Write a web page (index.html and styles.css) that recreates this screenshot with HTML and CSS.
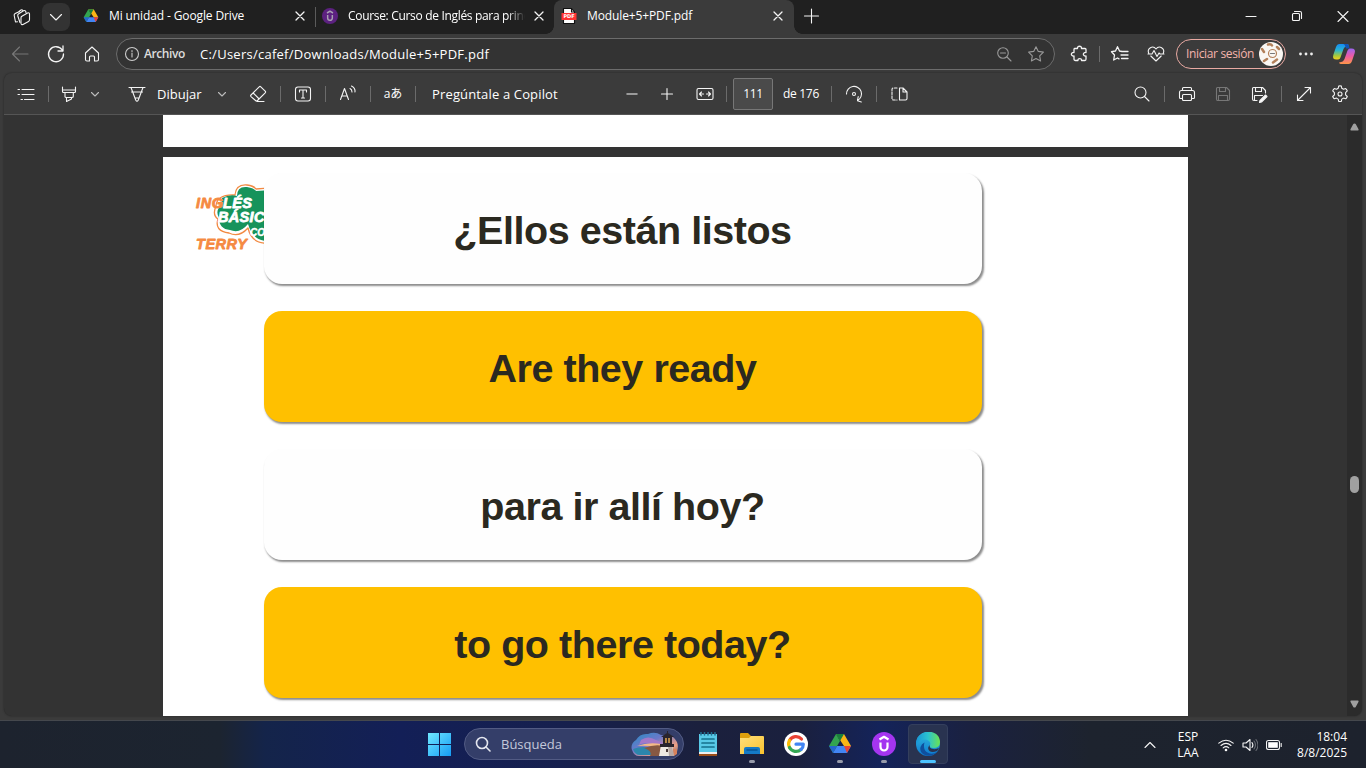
FILE: index.html
```html
<!DOCTYPE html>
<html lang="es">
<head>
<meta charset="utf-8">
<title>Module+5+PDF.pdf</title>
<link rel="stylesheet" href="styles.css">
</head>
<body>
<div class="screen">
<header class="tabstrip">
  <div class="spaces"><svg class="i20" viewBox="0 0 20 20"><path d="M5.500 14.800 3.500 15 2.200 8.500Q2 7.200 3.200 6.600L7.500 4.500M8 15.500 5.800 9Q5.300 7.600 6.700 6.800L11.500 3.700Q12.800 3 13.700 4.300L14 5.500M7 4.500 9 3Q10 2.300 11 3.500"/><path d="M9.500 9.500 15.500 6Q17.500 5.300 17.500 7V12.500Q17.500 14 16.500 14.500L11 17.500Q9.200 18 9 16.500V11Q9 10 9.500 9.500Z"/></svg></div>
  <div class="tabmenu"><svg class="i16" viewBox="0 0 16 16"><path d="m2.500 5.500 5.500 5.500 5.500-5.500"/></svg></div>
  <div class="tab first">
    <svg class="i16 plain" viewBox="0 0 24 24"><use href="#drive"/></svg>
    <span class="title">Mi unidad - Google Drive</span>
    <svg class="i16 x" viewBox="0 0 16 16"><path d="m4 4 8 8m0-8-8 8"/></svg>
  </div>
  <div class="tab second">
    <svg class="i16 plain" viewBox="0 0 24 24"><circle cx="12" cy="12" r="12" fill="#5c2180"/><path d="M8.500 10.500v4.500a3.500 3.500 0 0 0 7 0v-4.500M7.500 7.500 12 4.800l4.500 2.700" fill="none" stroke="#a9a0b2" stroke-width="2.200" stroke-linecap="butt"/></svg>
    <span class="title">Course: Curso de Inglés para princ</span>
    <svg class="i16 x" viewBox="0 0 16 16"><path d="m4 4 8 8m0-8-8 8"/></svg>
  </div>
  <div class="tab active">
    <svg class="i16 plain" viewBox="0 0 16 16"><path d="M2.500 .500h8L13.500 4v11.500h-11z" fill="#fff" stroke="#111"/><path d="M10.500 .500V4h3" fill="none" stroke="#111"/><path d="M.5 5h15v7H.5z" fill="#f33"/><text x="8" y="10.400" class="pdfmark">PDF</text></svg>
    <span class="title">Module+5+PDF.pdf</span>
    <svg class="i16 x" viewBox="0 0 16 16"><path d="m4 4 8 8m0-8-8 8"/></svg>
  </div>
  <svg class="newtab" viewBox="0 0 16 16"><path d="M7.500 1v14M.500 8h14"/></svg>
  <div class="winbtns">
    <svg class="i16" viewBox="0 0 16 16"><path d="M3 8.500h10"/></svg>
    <svg class="i16" viewBox="0 0 16 16"><rect x="3.500" y="5.500" width="7" height="7" rx="1"/><path d="M5.500 3.500h5.500q1.500 0 1.500 1.500v5.500"/></svg>
    <svg class="i16" viewBox="0 0 16 16"><path d="m3 3.500 10 10m0-10-10 10"/></svg>
  </div>
</header>

<nav class="navrow">
  <svg class="i20 dim" viewBox="0 0 20 20"><path d="M18 10H2.500M9.500 3l-7 7 7 7"/></svg>
  <svg class="i20 strong" viewBox="0 0 20 20"><path d="M16.200 6A7.500 7.500 0 1 0 17.500 10M17 2v5h-5"/></svg>
  <svg class="i20" viewBox="0 0 20 20"><path d="M3.500 9 10 3l6.500 6v6.500q0 1.500-1.500 1.500h-2.500v-4q0-1-1-1h-3q-1 0-1 1v4H5q-1.500 0-1.500-1.500z"/></svg>
  <div class="address">
    <svg class="i16" viewBox="0 0 16 16"><circle cx="8" cy="8" r="6.500"/><path d="M8 7v4M8 4.500v1"/></svg>
    <span class="scheme">Archivo</span>
    <span class="url">C:/Users/cafef/Downloads/Module+5+PDF.pdf</span>
    <svg class="i16 grey" viewBox="0 0 16 16"><circle cx="7" cy="7" r="5.300"/><path d="m11 11 4 4M4.500 7h5"/></svg>
    <svg class="star grey" viewBox="0 0 18 18"><path d="m9 1.700 2.300 4.700 5.100.7-3.700 3.700.9 5.200L9 13.500 4.400 16l.9-5.200L1.600 7.100l5.100-.7z"/></svg>
  </div>
  <svg class="i20 strong" viewBox="0 0 20 20"><path d="M5.500 4.500h3c-.5-3 4.500-3 4 0h3.500q1 0 1 1v3c-3.500-.5-3.500 4 0 3.500v3q0 1.500-1 1.500h-3.500c.5-2.500-4-2.500-3.500 0H6.500q-1.500 0-1.500-1.500V12c-3.500.5-3.500-4 0-3.500v-3q0-1 .5-1z"/></svg>
  <i class="sep"></i>
  <svg class="i20 strong" viewBox="0 0 20 20"><path d="M12 7.500 9.500 7 7.500 2.700 5.500 7 1.500 7.700l3 3.300-.8 5 3.800-2 1.500.9M11.500 7.500H18M11 11h7M11.500 14.500H18"/></svg>
  <svg class="i20" viewBox="0 0 20 20"><path d="M2.800 9.500C.5 4 7 1 10 5c3-4 9.500-1 7.200 4.500M4.800 12 10 17l5.200-5M2 10h4l2-3.500 3 6 2-3.500 1 1h4"/></svg>
  <div class="signin"><span>Iniciar sesión</span>
    <svg class="avatar plain" viewBox="0 0 24 24"><circle cx="12" cy="12" r="12" fill="#faf7f3"/><g fill="none" stroke="#b3805a" stroke-width="1.200"><circle cx="13.500" cy="11.500" r="4"/><path d="M9 2.500q3-1 4 1M3 7l2 3M5 19l3-2M14 20.500l4-3M18 5l2 2" stroke-width="2.500"/><path d="M11.500 11.500h4" stroke="#777"/></g></svg>
  </div>
  <svg class="i20 dots plain" viewBox="0 0 20 20"><circle cx="4.500" cy="10" r="1.400"/><circle cx="10" cy="10" r="1.400"/><circle cx="15.500" cy="10" r="1.400"/></svg>
  <svg class="copilot plain" viewBox="0 0 24 24">
    <path d="M17 3.500Q16.500 2 15 2H7.500Q5 2 4 5L1.300 13Q0 17.500 4.500 17.500H6q2 0 3-3.500l2.500-7Q12.500 4 17 3.500z" fill="url(#cpa)"/>
    <path d="M17.500 6.500Q17 2 15 2H11q2 0 3 4.500z" fill="#1254b8"/>
    <path d="M7 20.500Q7.500 22 9 22h7.500q2.500 0 3.500-3l2.700-8Q24 6.500 19.500 6.500H18q-2 0-3 3.500l-2.500 7Q11.500 20 7 20.500z" fill="url(#cpb)"/></svg>
</nav>

<section class="viewer">
  <div class="pdfbar">
    <svg class="i20" viewBox="0 0 20 20"><path d="M6 5.500h12M6 10.500h12M8.500 15.500H18M2 5.500h1.500M2 10.500h1.500M5 15.500h1.500"/></svg><i class="sep"></i>
    <svg class="i20" viewBox="0 0 20 20"><path d="M3.500 3v4.500q0 1 1 1h11q1 0 1-1V3M3.500 6h13M6 8.500v4.300q0 .7 1.500.7H13q1.300 0 1.300-1.300V8.500M7.500 13.500v4L12.500 15v-1.500"/></svg>
    <svg class="chev" viewBox="0 0 10 10"><path d="m1.500 3.500 3.500 3.500 3.500-3.500"/></svg>
    <svg class="i20 pen" viewBox="0 0 20 20"><path d="M2 3.500h16M4 3.500 8.700 16q1.300 2.500 2.600 0L16 3.500M4.500 8h11M8 14h4"/></svg>
    <span class="label draw">Dibujar</span>
    <svg class="chev" viewBox="0 0 10 10"><path d="m1.500 3.500 3.500 3.500 3.500-3.500"/></svg>
    <svg class="i20 eraser" viewBox="0 0 20 20"><path d="M3 11 11.200 2.800q.8-.8 1.600 0l4.400 4.400q.8.800 0 1.600L9.500 16.500q-1 1-2 0L3 12.600q-.8-.8 0-1.600zM5.200 9l6 6M9 17.500h7"/></svg><i class="sep"></i>
    <svg class="i20" viewBox="0 0 20 20"><rect x="2.500" y="3" width="15" height="14" rx="2.500"/><path d="M6.500 8V6h7v2M10 6v8M8.500 14h3"/></svg><i class="sep"></i>
    <svg class="i20" viewBox="0 0 20 20"><path d="M2.500 15.500 6.500 4.500 10.500 15.500M4 12h5M12 4.500q2 1 2 3.500M13.500 2q4 2 3.500 6"/></svg><i class="sep"></i>
    <span class="label translate">aあ</span><i class="sep"></i>
    <span class="label ask">Pregúntale a Copilot</span>
    <svg class="i16 minus" viewBox="0 0 16 16"><path d="M3 8h10"/></svg>
    <svg class="i16" viewBox="0 0 16 16"><path d="M8 2.500v11M2.500 8h11"/></svg>
    <svg class="i20 fit" viewBox="0 0 20 20"><rect x="2" y="4.500" width="16" height="11" rx="1.500"/><path d="M5 10h3.500M15 10h-3.500M6.500 8l-2 2 2 2M13.500 8l2 2-2 2"/></svg><i class="sep"></i>
    <span class="pageno">111</span><span class="label total">de 176</span><i class="sep"></i>
    <svg class="i20" viewBox="0 0 20 20"><path d="M2.500 10A7.500 7.500 0 1 1 13.500 16.500M14.200 12.500l-.7 4.300 3.800 1.200"/><circle cx="10" cy="10" r="1.500"/></svg><i class="sep"></i>
    <svg class="i20" viewBox="0 0 20 20"><path d="M10.500 4v12h6q1.500 0 1.500-1.500V8l-4-4zM14 4v4h4"/><path d="M8 4H4.500Q3 4 3 5.500v9Q3 16 4.500 16H8" stroke-dasharray="2.500 1.500"/></svg>
    <b></b>
    <svg class="i20" viewBox="0 0 20 20"><circle cx="8.500" cy="8.500" r="5.500"/><path d="m12.500 12.500 4.500 4.500"/></svg><i class="sep"></i>
    <svg class="i20" viewBox="0 0 20 20"><path d="M5.500 6V4.500q0-1 1-1h7q1 0 1 1V6M5.500 14.500h-2q-1 0-1-1v-5q0-2 2-2h11q2 0 2 2v5q0 1-1 1h-2"/><rect x="5.500" y="10.500" width="9" height="6" rx="1"/></svg>
    <svg class="i20 dim" viewBox="0 0 20 20"><path d="M4.500 3.500h9l3 3v8.500q0 1.500-1.500 1.500H4.500q-1 0-1-1.500V4.500q0-1 1-1zM6.500 3.500v4h6v-4M5.500 16.500v-5h9v5"/></svg>
    <svg class="i20" viewBox="0 0 20 20"><path d="M16.500 9V6.500l-3-3h-9q-1 0-1 1V15q0 1.500 1.500 1.500h3M6.500 3.500v4h6v-4M5.500 16.500v-5h8"/><path d="m11 16.500 5.500-5.500 1.500 1.500-5.500 5.500-2 .5z" fill="#fff"/></svg><i class="sep"></i>
    <svg class="i20" viewBox="0 0 20 20"><path d="m3.500 16.500 13-13M11 3.500h5.500V9M3.500 11v5.500H9"/></svg>
    <svg class="i20" viewBox="0 0 20 20"><path d="M10 1.800q1 0 1.300.2l.5 2.300 1.700 1 2.200-.7q1 .9 1.600 2.300l-1.700 1.700v2.300l1.700 1.600q-.6 1.400-1.600 2.300l-2.200-.7-1.700 1-.5 2.300q-1.300.3-2.600 0l-.5-2.300-1.700-1-2.200.7q-1-.9-1.600-2.300l1.700-1.600V8.600L2.700 6.900q.6-1.400 1.600-2.300l2.200.7 1.700-1L8.700 2z"/><circle cx="10" cy="10" r="2"/></svg>
  </div>
  <div class="content">
    <main class="pages">
      <div class="page previous"></div>
      <div class="page current">
        <svg class="logo plain" viewBox="0 0 69 72">
          <path d="M23 38Q17 34 21 25Q22 13 40 14Q41 3 52 4Q59 5 61 8L75 7V62Q57 64 53 47Q44 57 34 52Q19 50 23 38Z" fill="#fff" stroke="#f28a43" stroke-width="1.300"/>
          <path d="M24 37Q20 30 26 24L27 17Q35 13 42 15Q42 5 52 6Q59 7 61 10L75 9V60Q58 61 53 43Q45 53 35 49Q24 48 24 37Z" fill="#16935b"/>
          <text x="1" y="27" textLength="27" class="logotext orange">ING</text><text x="28" y="27" textLength="29" class="logotext">LÉS</text>
          <text x="23" y="41" textLength="58" class="logotext">BÁSICO</text><text x="55" y="55" class="logotext small">CON</text>
          <text x="1" y="68" textLength="51" class="logotext orange">TERRY</text>
        </svg>
        <div class="cards">
          <div class="card"><span>¿Ellos están listos</span></div>
          <div class="card gold"><span>Are they ready</span></div>
          <div class="card"><span>para ir allí hoy?</span></div>
          <div class="card gold"><span>to go there today?</span></div>
        </div>
      </div>
    </main>
    <aside class="scroll">
      <svg viewBox="0 0 10 8"><path d="M5 0q1 0 1.500 1L9.500 6.500Q10 8 8.500 8h-7Q0 8 .5 6.500L3.500 1Q4 0 5 0z"/></svg>
      <i class="thumb"></i>
      <svg class="down" viewBox="0 0 10 8"><path d="M5 8q1 0 1.500-1L9.500 1.500Q10 0 8.500 0h-7Q0 0 .5 1.500L3.500 7Q4 8 5 8z"/></svg>
    </aside>
  </div>
</section>

<footer class="taskbar">
  <svg class="start plain" viewBox="0 0 23 23"><path d="M0 0h11v11H0zM12 0h11v11H12zM0 12h11v11H0zM12 12h11v11H12z" fill="url(#win)"/></svg>
  <div class="search">
    <svg class="i16" viewBox="0 0 16 16"><circle cx="7" cy="7" r="5.500"/><path d="m11 11 4 4"/></svg>
    <span>Búsqueda</span>
    <svg class="lighthouse plain" viewBox="0 0 48 26">
      <path d="M1 19Q-1 13 5 9Q9 2 17 3Q24 0 30 4L42 6Q49 12 46 21L43 25H8Q3 25 1 19z" fill="url(#sky)"/>
      <path d="M10 9Q17 4 25 9L33 12 25 15Q14 10 8 14z" fill="#a278c9"/><path d="M6 15Q17 11 30 13L32 22 12 18Q20 17 25 16Q15 14 6 15z" fill="#f4b987"/>
      <path d="M2 18Q12 14 23 18Q18 21 27 24H9Q4 24 2 18z" fill="#2c86ac"/><path d="M13 17Q24 13 32 15V25H19Q22 20 13 17z" fill="#875842"/>
      <path d="M30 14h11l2 11H28z" fill="#eee9e3"/><path d="M37 15h4l2 10h-5z" fill="#b8aaa5"/><path d="M29 13h14v3H29zM32 6h9v7h-9zM30 6l6-4h1l6 4zM36 0h1v3h-1z" fill="#29242d"/><path d="M34 7h5v5h-5z" fill="#b98a48"/><path d="M36.500 7v5" stroke="#29242d"/><path d="M35 18h2v3h-2z" fill="#4a3a39"/><path d="M42 18h4v5l-3 2z" fill="#d8825b"/>
    </svg>
  </div>
  <div class="app"><svg class="plain" viewBox="0 0 24 24"><path d="M3 22h18v2H3z" fill="#9a4e18"/><path d="M3 20h18v2H3z" fill="#eee"/><path d="M3 2h18v18H3z" fill="#58c9e7"/><path d="M5 0v3M8.500 0v3M12 0v3M15.500 0v3M19 0v3" stroke="#216e90" stroke-width="1.500"/><path d="M6 7h12M6 11h12M6 15h12" stroke="#14708d" stroke-width="1.700"/></svg></div>
  <div class="app open"><svg class="plain" viewBox="0 0 24 24"><path d="M0 2q0-1 1-1h7l3 3h11v5H0z" fill="#dfa00d"/><path d="M0 6h9l2-2h12q1 0 1 1v17H0z" fill="url(#folder)"/><path d="M4 22v-5q0-2 2-2h12q2 0 2 2v5z" fill="#157ac6"/><path d="M7 18h10" stroke="#075695" stroke-width="1.500"/></svg></div>
  <div class="app"><svg class="plain" viewBox="0 0 24 24"><circle cx="12" cy="12" r="12" fill="#fff"/><g fill="none" stroke-width="3.200"><path d="M17.500 7A7.400 7.400 0 0 0 5.500 8.500" stroke="#e94235"/><path d="M5.500 8.500a7.500 7.500 0 0 0 0 7" stroke="#fbbc04"/><path d="M5.500 15.500A7.400 7.400 0 0 0 17 17.500" stroke="#34a853"/><path d="M17 17.500q2.300-2 2.300-5.300H12" stroke="#4285f4"/></g></svg></div>
  <div class="app open"><svg class="plain" viewBox="0 0 24 24"><g id="drive"><path d="M8 2h8l7 12h-7z" fill="#fbb516"/><path d="m8 2 4 7L5 21l-4-7z" fill="#33a450"/><path d="M8 2h8l-4 7z" fill="#18803c"/><path d="M5 21l4-7h14l-4 7z" fill="#4285f4"/><path d="M16 14h7l-4 7z" fill="#ea4335"/><path d="M1 14h8l-4 7z" fill="#2566cf"/></g></svg></div>
  <div class="app open"><svg class="plain" viewBox="0 0 24 24"><circle cx="12" cy="12" r="12" fill="#a435f0"/><path d="M8.500 10.500v4.500a3.500 3.500 0 0 0 7 0v-4.500M7.500 7.500 12 4.800l4.500 2.700" fill="none" stroke="#fff" stroke-width="2.200" stroke-linecap="butt"/></svg></div>
  <div class="app focused"><svg class="plain" viewBox="0 0 24 24"><circle cx="12" cy="12" r="12" fill="url(#edgeb)"/><path d="M0 12C0-4 24-4 24 10q0 6-7 6-4 0-3-3 1-2-1-4Q7 5 0 12z" fill="url(#edgeg)"/><path d="M8.500 10.500q-2 7 3 10 5 3 10-1-4 5-11 4Q3 21 4.500 15q1-3.500 4-4.500z" fill="#0f4f9e"/><path d="M14 13q-1.500 3 3 4 3 .6 6-1-.5 2-2 3-5 2-7.500 0-3-3 .5-6z" fill="#293350"/></svg></div>
  <div class="tray">
    <svg class="i16" viewBox="0 0 16 16"><path d="m3 10.500 5-5 5 5"/></svg>
    <span class="lang">ESP<br>LAA</span>
    <svg class="i16" viewBox="0 0 16 16"><path d="M.8 6.200q7.200-6 14.400 0M3 8.500q5-4.200 10 0M5.200 10.800q2.800-2.300 5.600 0"/><circle cx="8" cy="13" r="1.300" fill="#fff" stroke="none"/></svg>
    <svg class="i16" viewBox="0 0 16 16"><path d="M1 6v4h3l4 3.500v-11L4 6zM10 5.500q1.800 2.500 0 5"/><path d="M12 4q3 4 0 8M14 2.500q4 5.500 0 11" opacity=".35"/></svg>
    <svg class="i16" viewBox="0 0 16 16"><rect x=".500" y="3.500" width="13" height="9" rx="2"/><rect x="2.200" y="5.200" width="9.600" height="5.600" fill="#fff" stroke="none"/><path d="M15.200 6.500v3"/></svg>
    <span class="clock">18:04<br>8/8/2025</span>
  </div>
</footer>
</div>
<svg width="0" height="0" class="defs"><defs>
  <linearGradient id="cpa" x1="0" y1="0" x2="0" y2="1"><stop stop-color="#168df4"/><stop offset=".4" stop-color="#29b4d3"/><stop offset=".75" stop-color="#a6c83d"/><stop offset="1" stop-color="#f4d11c"/></linearGradient>
  <linearGradient id="cpb" x1="0" y1="0" x2="0" y2="1"><stop stop-color="#9b65f1"/><stop offset=".5" stop-color="#ee5aa4"/><stop offset="1" stop-color="#fd9647"/></linearGradient>
  <linearGradient id="win" x1="0" y1="0" x2="1" y2="1"><stop stop-color="#70e8ff"/><stop offset="1" stop-color="#159cf5"/></linearGradient>
  <linearGradient id="sky" x1="0" y1="0" x2="1" y2="1"><stop stop-color="#248fc4"/><stop offset=".4" stop-color="#6b78ca"/><stop offset=".75" stop-color="#f1a080"/><stop offset="1" stop-color="#3a5f86"/></linearGradient>
  <linearGradient id="folder" x1="0" y1="0" x2="1" y2="1"><stop stop-color="#ffe07c"/><stop offset="1" stop-color="#fac22d"/></linearGradient>
  <linearGradient id="edgeg" x1="0" y1="0" x2="1" y2="0"><stop stop-color="#1894d8"/><stop offset=".5" stop-color="#2bc3cf"/><stop offset="1" stop-color="#6be351"/></linearGradient>
  <linearGradient id="edgeb" x1="0" y1="0" x2="0" y2="1"><stop stop-color="#30b9df"/><stop offset="1" stop-color="#0c78cf"/></linearGradient>
</defs></svg>
</body>
</html>
```
FILE: styles.css
```css
* { box-sizing: border-box; }
body { margin: 0; background: #3b3b3b; color: #fff; font: 12px/16px "Open Sans", "Noto Sans", sans-serif; overflow: hidden; }
.screen { width: 1366px; height: 768px; display: grid; grid-template-rows: 34px 39px 647px 48px; background: #3b3b3b; }
svg { display: block; flex: none; fill: none; stroke: #f4f4f4; stroke-width: 1.1; stroke-linejoin: round; stroke-linecap: round; }
svg.plain { stroke: none; }
svg.strong { stroke-width: 1.3; }
.defs { position: absolute; }
.i20 { width: 20px; height: 20px; }
.i16 { width: 16px; height: 16px; }
.dim { stroke: #777; }
.grey { stroke: #999; }
.sep { width: 1px; height: 16px; background: #6b6b6b; }
span { white-space: nowrap; }

.tabstrip { display: flex; background: #202020; }
.spaces { width: 42px; padding: 7px 0 0 12px; }
.tabmenu { width: 28px; height: 28px; margin: 3px 6px 0 0; border-radius: 8px; background: #333; padding: 6px; }
.tab { height: 34px; display: flex; align-items: center; gap: 10px; position: relative; padding-bottom: 2px; }
.tab .title { flex: 1; min-width: 0; letter-spacing: -.12px; }
.first { width: 240px; padding-left: 7px; padding-right: 8px; }
.first::after { content: ""; width: 1px; height: 20px; background: #5b5b5b; position: absolute; right: 0; top: 7px; }
.second { width: 238px; padding-left: 6px; padding-right: 7px; }
.second .title { letter-spacing: -.32px; margin-right: -4px; -webkit-mask-image: linear-gradient(90deg, #000 90%, transparent 100%); mask-image: linear-gradient(90deg, #000 90%, transparent 100%); }
.active { width: 240px; background: #3b3b3b; border-radius: 8px 8px 0 0; padding-left: 7px; padding-right: 8px; }
.active::before, .active::after { content: ""; position: absolute; bottom: 0; width: 8px; height: 8px; }
.active::before { left: -8px; background: radial-gradient(circle at 0 0, #202020 7.5px, #3b3b3b 8px); }
.active::after { right: -8px; background: radial-gradient(circle at 100% 0, #202020 7.5px, #3b3b3b 8px); }
.x { stroke-width: 1.3; }
.pdfmark { font: bold 5px "DejaVu Sans", sans-serif; fill: #fff; text-anchor: middle; }
.newtab { width: 16px; height: 16px; margin: 8px 0 0 10px; }
.winbtns { display: flex; gap: 30px; margin: 8px 15px 0 auto; }

.navrow { display: flex; align-items: center; padding: 1px 10px 0 10px; gap: 16px; }
.address { width: 939px; height: 32px; flex: none; margin-left: -2px; border: 1px solid #6c6c6c; border-radius: 16px; background: #333; display: flex; align-items: center; padding: 0 9px 0 7px; }
.scheme { font-weight: 600; width: 60px; padding-left: 4px; color: #ddd; letter-spacing: -.4px; }
.address .i16:first-child { stroke: #ccc; }
.url { flex: 1; font-size: 13px; letter-spacing: .26px; }
.star { width: 18px; height: 18px; margin-left: 15px; }
.address + .i20 { margin-left: -2px; }
.navrow .sep { margin: 0 -6px; }
.navrow .sep + .i20 { margin-left: 0; }
.signin { width: 110px; height: 30px; flex: none; margin-left: -6px; border: 1px solid #e8a9a2; border-radius: 15px; color: #f4b4ad; display: flex; align-items: center; justify-content: space-between; padding: 0 2px 0 9px; letter-spacing: -.35px; }
.avatar { width: 24px; height: 24px; }
.navrow .dots { fill: #eee; margin-left: -6px; }
.copilot { width: 24px; height: 24px; }

.viewer { width: 1358px; height: 643px; margin-left: 4px; border-radius: 8px; overflow: hidden; background: #333; box-shadow: 0 0 2px #222; }
.pdfbar { height: 42px; border-bottom: 1px solid #555; background: #3b3b3b; display: grid; align-items: center; justify-items: center; font-size: 13px;
  grid-template-columns: 44px 1px 40px 12px 56px 59px 12px 52px 1px 44px 1px 44px 1px 44px 1px 192px 48px 22px 48px 1px 52px 52px 1px 44px 1px 44px 199px 44px 1px 44px 28px 44px 1px 44px 28px; }
.chev { width: 10px; height: 10px; stroke: #bbb; }
.pen { justify-self: end; margin-right: 10px; }
.eraser { margin-left: 8px; }
.fit { margin-left: 6px; }
.label { justify-self: start; }
.translate { justify-self: center; font-family: "Open Sans", "Noto Sans CJK JP", sans-serif; font-size: 12px; }
.ask { padding-left: 16px; letter-spacing: .15px; }
.minus { stroke: #bbb; stroke-width: 1.5; }
.pageno { width: 40px; height: 32px; border: 1px solid #777; border-radius: 2px; background: #4a4a4a; display: grid; place-items: center; font-size: 12px; letter-spacing: -.3px; }
.total { font-size: 12px; padding-left: 4px; letter-spacing: -.3px; }

.content { height: 601px; display: flex; }
.pages { flex: 1; padding-left: 159px; }
.page { width: 1025px; background: #fff; }
.previous { height: 32px; margin-bottom: 10px; }
.current { height: 559px; display: flex; padding: 16px 0 0 32px; }
.logo { width: 69px; height: 72px; margin-top: 8px; overflow: hidden; }
.logotext { font: italic 900 14.500px "Liberation Sans", Arial, sans-serif; fill: #fff; stroke: #fff; stroke-width: .8; }
.logotext.orange { fill: #f58a42; stroke: #f58a42; }
.logotext.small { font-size: 10px; stroke-width: .4; }
.cards { width: 718px; display: flex; flex-direction: column; gap: 27px; }
.card { height: 111px; border-radius: 18px; background: #fefefe; box-shadow: 1.5px 2px 2px rgba(0,0,0,.45); display: flex; align-items: center; justify-content: center; color: #2b2920; font: bold 39.5px/46px "Liberation Sans", Arial, sans-serif; letter-spacing: -.45px; padding: 2px 1px 0 0; }
.gold { background: #ffc000; }
.scroll { width: 15px; background: #2b2b2b; display: flex; flex-direction: column; align-items: center; padding: 8px 0; }
.scroll svg { width: 9px; height: 8px; fill: #a0a0a0; stroke: none; }
.thumb { width: 9px; height: 17px; border-radius: 5px; background: #a0a0a0; margin-top: 345px; }
.scroll .down { margin-top: auto; }

.taskbar { display: flex; align-items: center; padding-left: 428px; border-top: 1px solid #45484d; background: linear-gradient(90deg, #1d232e 0, #1c2430 220px, #14244a 265px, #131f57 400px, #16204e 560px, #1b203d 700px, #1a203e 800px, #14235a 880px, #1a2140 970px, #1d232e 1090px, #1d222d 1366px); }
.start { width: 23px; height: 23px; margin-right: 13px; }
.search { width: 220px; height: 32px; border: 1px solid #525b84; border-radius: 16px; background: #343e69; display: flex; align-items: center; padding: 0 4px 0 10px; font-size: 13px; color: #c4c8da; margin-right: 4px; }
.search .i16 { stroke: #e4e6ef; stroke-width: 1.6; margin-right: 10px; }
.lighthouse { width: 48px; height: 26px; margin-left: auto; }
.app { width: 40px; height: 40px; margin-right: 4px; border-radius: 4px; padding: 8px; position: relative; }
.app svg { width: 24px; height: 24px; }
.open::after, .focused::after { content: ""; position: absolute; bottom: 1px; left: 17px; width: 6px; height: 3px; border-radius: 2px; background: #989cab; }
.focused { background: #293350; border: 1px solid #343f5d; padding: 7px; }
.focused::after { background: #4cc2ff; left: 11px; width: 16px; bottom: 0; }
.start, .search, .app { margin-top: -1px; }
.tray { margin-left: auto; display: flex; align-items: center; padding-right: 19px; }
.lang { width: 30px; text-align: center; margin: 0 15px; }
.tray .i16 + .i16 { margin-left: 8px; }
.clock { width: 65px; text-align: right; }
```
